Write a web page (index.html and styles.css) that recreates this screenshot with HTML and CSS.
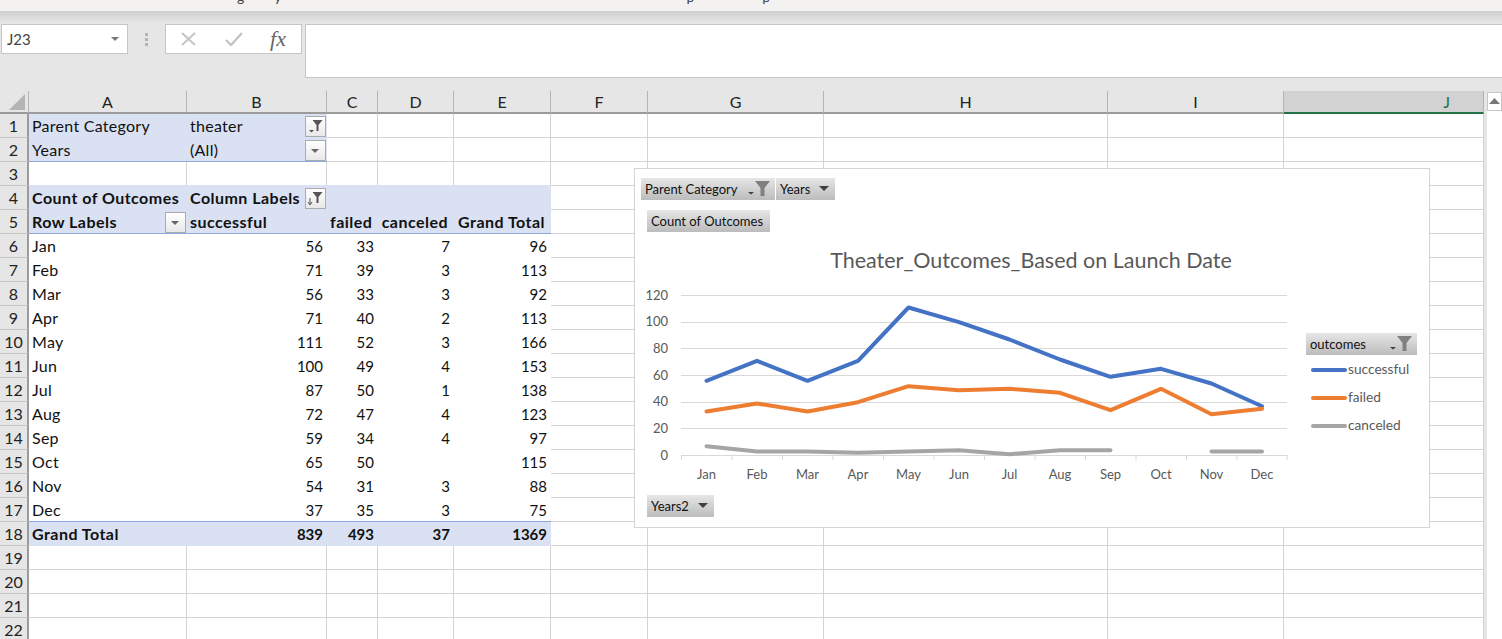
FILE: index.html
```html
<!DOCTYPE html>
<html>
<head>
    <meta charset="utf-8"/>
    <title>Theater outcomes</title>
    <link rel="stylesheet" href="styles.css">
</head>

<body>
<div class="title-edge"><span class="ink ink-g">g</span><span class="ink ink-y">y</span><span class="ink ink-p1">p</span><span class="ink ink-p2">p</span></div>

<div class="formula">
    <div class="name-box">
        <span>J23</span>
        <svg width="9" height="5" viewBox="0 0 9 5"><path d="M0 0h8L4 4z" fill="#777"/></svg>
    </div>
    <div class="grip"><i></i><i></i><i></i></div>
    <div class="fx-box">
        <svg width="16" height="14" viewBox="0 0 16 14"><path d="M1 1l13 12M14 1L1 13" stroke="#c4c4c4" stroke-width="2" fill="none"/></svg>
        <svg width="18" height="14" viewBox="0 0 18 14"><path d="M1 8l5 5L17 1" stroke="#c4c4c4" stroke-width="2.4" fill="none"/></svg>
        <span class="fx">fx</span>
    </div>
    <div class="formula-input"></div>
</div>

<div class="sheet">
    <table class="grid">
        <colgroup>
            <col class="c-rh"><col class="c-a"><col class="c-b"><col class="c-c"><col class="c-d"><col class="c-e"><col class="c-f"><col class="c-g"><col class="c-h"><col class="c-i"><col class="c-j">
        </colgroup>
        <tr class="heads">
            <th class="corner"><svg width="28" height="21" viewBox="0 0 28 21"><path d="M9 19L25 3v16z" fill="#b4b4b4"/></svg></th>
            <th>A</th><th>B</th><th>C</th><th>D</th><th>E</th><th>F</th><th>G</th><th>H</th><th>I</th><th class="active">J</th>
        </tr>
        <tr>
            <th class="rn">1</th>
            <td class="page-f">Parent Category</td>
            <td class="page-f has-btn"><div class="cell-row"><span>theater</span>
                <span class="btn"><svg width="19" height="19" viewBox="0 0 19 19"><path d="M6.500 3h10l-4 5v6h-2V8z" fill="#555"/><path d="M3 13h5l-2.500 2.500z" fill="#555"/></svg></span></div></td>
            <td></td><td></td><td></td><td></td><td></td><td></td><td></td><td></td>
        </tr>
        <tr>
            <th class="rn">2</th>
            <td class="page-f line">Years</td>
            <td class="page-f line has-btn"><div class="cell-row"><span>(All)</span>
                <span class="btn"><svg width="19" height="19" viewBox="0 0 19 19"><path d="M5 8h8l-4 4z" fill="#666"/></svg></span></div></td>
            <td></td><td></td><td></td><td></td><td></td><td></td><td></td><td></td>
        </tr>
        <tr>
            <th class="rn">3</th>
            <td class="no-b"></td><td class="no-b"></td><td class="no-b"></td><td class="no-b"></td><td class="no-b"></td><td></td><td></td><td></td><td></td><td></td>
        </tr>
        <tr>
            <th class="rn">4</th>
            <td class="band top">Count of Outcomes</td>
            <td class="band top has-btn"><div class="cell-row"><span>Column Labels</span>
                <span class="btn"><svg width="19" height="19" viewBox="0 0 19 19"><path d="M6.500 3h10l-4 5v6h-2V8z" fill="#555"/><path d="M4 9v6M2 13l2 3 2-3" stroke="#555" fill="none"/></svg></span></div></td>
            <td class="band top"></td><td class="band top"></td><td class="band top"></td><td></td><td></td><td></td><td></td><td></td>
        </tr>
        <tr>
            <th class="rn">5</th>
            <td class="band line has-btn"><div class="cell-row"><span>Row Labels</span>
                <span class="btn"><svg width="19" height="19" viewBox="0 0 19 19"><path d="M5 8h8l-4 4z" fill="#666"/></svg></span></div></td>
            <td class="band line">successful</td>
            <td class="band line cap">failed</td><td class="band line cap">canceled</td><td class="band line cap">Grand Total</td>
            <td></td><td></td><td></td><td></td><td></td>
        </tr>
        <tr><th class="rn">6</th><td class="pv">Jan</td><td class="pv num">56</td><td class="pv num">33</td><td class="pv num">7</td><td class="pv num">96</td><td></td><td></td><td></td><td></td><td></td></tr>
        <tr><th class="rn">7</th><td class="pv">Feb</td><td class="pv num">71</td><td class="pv num">39</td><td class="pv num">3</td><td class="pv num">113</td><td></td><td></td><td></td><td></td><td></td></tr>
        <tr><th class="rn">8</th><td class="pv">Mar</td><td class="pv num">56</td><td class="pv num">33</td><td class="pv num">3</td><td class="pv num">92</td><td></td><td></td><td></td><td></td><td></td></tr>
        <tr><th class="rn">9</th><td class="pv">Apr</td><td class="pv num">71</td><td class="pv num">40</td><td class="pv num">2</td><td class="pv num">113</td><td></td><td></td><td></td><td></td><td></td></tr>
        <tr><th class="rn">10</th><td class="pv">May</td><td class="pv num">111</td><td class="pv num">52</td><td class="pv num">3</td><td class="pv num">166</td><td></td><td></td><td></td><td></td><td></td></tr>
        <tr><th class="rn">11</th><td class="pv">Jun</td><td class="pv num">100</td><td class="pv num">49</td><td class="pv num">4</td><td class="pv num">153</td><td></td><td></td><td></td><td></td><td></td></tr>
        <tr><th class="rn">12</th><td class="pv">Jul</td><td class="pv num">87</td><td class="pv num">50</td><td class="pv num">1</td><td class="pv num">138</td><td></td><td></td><td></td><td></td><td></td></tr>
        <tr><th class="rn">13</th><td class="pv">Aug</td><td class="pv num">72</td><td class="pv num">47</td><td class="pv num">4</td><td class="pv num">123</td><td></td><td></td><td></td><td></td><td></td></tr>
        <tr><th class="rn">14</th><td class="pv">Sep</td><td class="pv num">59</td><td class="pv num">34</td><td class="pv num">4</td><td class="pv num">97</td><td></td><td></td><td></td><td></td><td></td></tr>
        <tr><th class="rn">15</th><td class="pv">Oct</td><td class="pv num">65</td><td class="pv num">50</td><td class="pv num"></td><td class="pv num">115</td><td></td><td></td><td></td><td></td><td></td></tr>
        <tr><th class="rn">16</th><td class="pv">Nov</td><td class="pv num">54</td><td class="pv num">31</td><td class="pv num">3</td><td class="pv num">88</td><td></td><td></td><td></td><td></td><td></td></tr>
        <tr><th class="rn">17</th><td class="pv line">Dec</td><td class="pv line num">37</td><td class="pv line num">35</td><td class="pv line num">3</td><td class="pv line num">75</td><td></td><td></td><td></td><td></td><td></td></tr>
        <tr><th class="rn">18</th><td class="band">Grand Total</td><td class="band num">839</td><td class="band num">493</td><td class="band num">37</td><td class="band num">1369</td><td></td><td></td><td></td><td></td><td></td></tr>
        <tr><th class="rn">19</th><td></td><td></td><td></td><td></td><td></td><td></td><td></td><td></td><td></td><td></td></tr>
        <tr><th class="rn">20</th><td></td><td></td><td></td><td></td><td></td><td></td><td></td><td></td><td></td><td></td></tr>
        <tr><th class="rn">21</th><td></td><td></td><td></td><td></td><td></td><td></td><td></td><td></td><td></td><td></td></tr>
        <tr><th class="rn">22</th><td></td><td></td><td></td><td></td><td></td><td></td><td></td><td></td><td></td><td></td></tr>
    </table>

    <div class="scrollbar">
        <div class="scroll-up"><svg width="12" height="7" viewBox="0 0 12 7"><path d="M0 6h11L5.500 0z" fill="#777"/></svg></div>
    </div>

    <div class="chart">
        <div class="fields">
            <div class="field f-parent">Parent Category
                <svg class="funnel" width="22" height="16" viewBox="0 0 22 16"><path d="M7 0h15l-5.500 7v8h-4V7z" fill="#808080"/><path d="M0 11h6l-3 2.500z" fill="#404040"/></svg>
            </div>
            <div class="field f-years">Years
                <svg class="arrow" width="11" height="6" viewBox="0 0 11 6"><path d="M0 0h10L5 5z" fill="#404040"/></svg>
            </div>
        </div>
        <div class="fields second">
            <div class="field f-count">Count of Outcomes</div>
        </div>
        <div class="chart-title">Theater_Outcomes_Based on Launch Date</div>
        <div class="plot-row">
            <svg class="plot" width="655" height="206" viewBox="641 284 655 206">
                <g class="gridlines">
                    <path d="M681 295.500H1287M681 322.500H1287M681 348.500H1287M681 375.500H1287M681 402.500H1287M681 428.500H1287M681 455.500H1287"/>
                    <path d="M681.500 455v5M732 455v5M782.500 455v5M833 455v5M883.500 455v5M934 455v5M984.500 455v5M1035 455v5M1085.500 455v5M1136 455v5M1186.500 455v5M1237 455v5M1287 455v5"/>
                </g>
                <g class="y-labels">
                    <text x="668" y="300">120</text>
                    <text x="668" y="326">100</text>
                    <text x="668" y="353">80</text>
                    <text x="668" y="380">60</text>
                    <text x="668" y="406">40</text>
                    <text x="668" y="433">20</text>
                    <text x="668" y="460">0</text>
                </g>
                <g class="x-labels">
                    <text x="706.500" y="479">Jan</text>
                    <text x="757" y="479">Feb</text>
                    <text x="807.500" y="479">Mar</text>
                    <text x="858" y="479">Apr</text>
                    <text x="908.500" y="479">May</text>
                    <text x="959" y="479">Jun</text>
                    <text x="1009.500" y="479">Jul</text>
                    <text x="1060" y="479">Aug</text>
                    <text x="1110.500" y="479">Sep</text>
                    <text x="1161" y="479">Oct</text>
                    <text x="1211.500" y="479">Nov</text>
                    <text x="1262" y="479">Dec</text>
                </g>
                <polyline class="series s-ok" points="706.500,380.800 757,360.800 807.500,380.800 858,360.800 908.500,307.500 959,322.200 1009.500,339.500 1060,359.500 1110.500,376.800 1161,368.800 1211.500,383.500 1262,406.200"/>
                <polyline class="series s-fail" points="706.500,411.500 757,403.500 807.500,411.500 858,402.200 908.500,386.200 959,390.200 1009.500,388.800 1060,392.800 1110.500,410.200 1161,388.800 1211.500,414.200 1262,408.800"/>
                <polyline class="series s-cancel" points="706.500,446.200 757,451.500 807.500,451.500 858,452.800 908.500,451.500 959,450.200 1009.500,454.200 1060,450.200 1110.500,450.200"/>
                <polyline class="series s-cancel" points="1211.500,451.500 1262,451.500"/>
            </svg>
            <div class="legend">
                <div class="field legend-field">outcomes
                    <svg class="funnel" width="22" height="16" viewBox="0 0 22 16"><path d="M7 0h15l-5.500 7v8h-4V7z" fill="#808080"/><path d="M0 11h6l-3 2.500z" fill="#404040"/></svg>
                </div>
                <div class="legend-item"><i class="key k-ok"></i>successful</div>
                <div class="legend-item"><i class="key k-fail"></i>failed</div>
                <div class="legend-item"><i class="key k-cancel"></i>canceled</div>
            </div>
        </div>
        <div class="fields second">
            <div class="field f-years2">Years2
                <svg class="arrow" width="11" height="6" viewBox="0 0 11 6"><path d="M0 0h10L5 5z" fill="#404040"/></svg>
            </div>
        </div>
    </div>
</div>
</body>
</html>
```

FILE: styles.css
```css
* {
    margin: 0;
    padding: 0;
    box-sizing: border-box;
}
html, body {
    height: 639px;
    overflow: hidden;
}
body {
    background: #e6e6e6;
    font-family: "Lato", "Liberation Sans", sans-serif;
    font-size: 15px;
    color: #111;
}

/* window title, only the descenders are left on screen */
.title-edge {
    height: 11px;
    background: #f3f2f1;
    overflow: hidden;
    display: flex;
    align-items: flex-start;
    font-size: 14px;
    line-height: 2px;
    color: #444;
}
.ink {
    margin-top: -4px;
}
.ink-g { margin-left: 237px; }
.ink-y { margin-left: 30px; }
.ink-p1 { margin-left: 405px; }
.ink-p2 { margin-left: 68px; }

/* formula bar */
.formula {
    height: 80px;
    padding-top: 13px;
    display: flex;
    align-items: flex-start;
    background: linear-gradient(#cfcfcf, #e6e6e6 12px);
}
.name-box {
    width: 127px;
    height: 30px;
    margin-left: 1px;
    padding: 0 7px 0 5px;
    display: flex;
    align-items: center;
    justify-content: space-between;
    background: #fff;
    border: 1px solid #c6c6c6;
    color: #444;
}
.grip {
    width: 37px;
    height: 30px;
    display: flex;
    flex-direction: column;
    align-items: center;
    justify-content: center;
    gap: 2px;
}
.grip i {
    width: 3px;
    height: 3px;
    background: #b4b4b4;
}
.fx-box {
    width: 137px;
    height: 30px;
    padding: 0 15px;
    display: flex;
    align-items: center;
    justify-content: space-between;
    background: #fff;
    border: 1px solid #c6c6c6;
}
.fx {
    font-family: "Liberation Serif", serif;
    font-style: italic;
    font-size: 22px;
    color: #666;
}
.formula-input {
    flex: 1;
    height: 54px;
    margin-left: 3px;
    background: #fff;
    border: 1px solid #c6c6c6;
    border-right: 0;
}

/* sheet */
.sheet {
    position: relative;
    display: flex;
    align-items: flex-start;
}
.grid {
    width: 1484px;
    flex: none;
    table-layout: fixed;
    border-collapse: separate;
    border-spacing: 0;
    background: #fff;
}
.c-rh { width: 29px; }
.c-a { width: 158px; }
.c-b { width: 140px; }
.c-c { width: 51px; }
.c-d { width: 76px; }
.c-e { width: 97px; }
.c-f { width: 97px; }
.c-g { width: 176px; }
.c-h { width: 284px; }
.c-i { width: 176px; }
.c-j { width: 200px; }
.grid tr {
    height: 24px;
}
.grid td {
    height: 24px;
    padding: 0 3px 2px;
    border-right: 1px solid #d4d4d4;
    border-bottom: 1px solid #d4d4d4;
    white-space: nowrap;
    font-size: 16px;
    letter-spacing: 0.27px;
    line-height: 21px;
}
.grid .heads {
    height: 23px;
}
.heads th {
    height: 23px;
    font-weight: normal;
    font-size: 16px;
    line-height: 21px;
    color: #222;
    background: #e6e6e6;
    border-right: 1px solid #b4b4b4;
    border-bottom: 2px solid #9b9b9b;
}
.corner svg {
    display: block;
}
.heads .active {
    padding-right: 33px;
    text-align: right;
    color: #217346;
    background: #d2d2d2;
    border-bottom-color: #217346;
}
.rn {
    font-weight: normal;
    font-size: 16px;
    line-height: 23px;
    color: #222;
    background: #e6e6e6;
    border-right: 2px solid #9b9b9b;
    border-bottom: 1px solid #c6c6c6;
}

.grid .page-f,
.grid .band {
    background: #d9e1f2;
    border-right: 0;
    border-bottom: 0;
}
.grid .band {
    font-weight: bold;
    letter-spacing: 0.47px;
}
/* the fill covers the gridline of the row above */
.grid .top {
    box-shadow: 0 -1px 0 #d9e1f2;
}
.grid .pv {
    border-right: 0;
    border-bottom: 0;
}
.grid .no-b {
    border-bottom: 0;
}
.grid .line {
    padding-bottom: 1px;
    border-bottom: 1px solid #8ea9db;
}
.grid .num {
    padding: 0 4px 0 3px;
    text-align: right;
    font-size: 15px;
    line-height: 20px;
    letter-spacing: 0;
}
.grid .cap {
    padding-right: 6px;
    text-align: right;
}
.grid .has-btn {
    padding: 0 1px 0 3px;
}
.grid .line.num,
.grid .line.has-btn {
    padding-top: 1px;
    padding-bottom: 0;
}
.cell-row {
    height: 21px;
    display: flex;
    align-items: center;
    justify-content: space-between;
}
.cell-row > span:first-child {
    margin-bottom: 2px;
    line-height: 19px;
}
.btn {
    width: 21px;
    height: 21px;
    display: block;
    background: linear-gradient(#fff, #e8e8e8);
    border: 1px solid #ababab;
}
.btn svg {
    display: block;
}

.scrollbar {
    flex: 1;
    height: 548px;
    padding-left: 3px;
}
.scroll-up {
    height: 19px;
    margin-top: 1px;
    display: flex;
    align-items: center;
    justify-content: center;
    background: #fff;
    border: 1px solid #c6c6c6;
}
.scrollbar::after {
    content: "";
    display: block;
    height: 528px;
    background: #fff;
}

/* pivot chart sits over the cells */
.chart {
    position: absolute;
    left: 634px;
    top: 77px;
    width: 796px;
    height: 360px;
    padding: 9px 0 0 6px;
    background: #fff;
    border: 1px solid #d4d4d4;
}
.fields {
    display: flex;
    gap: 1px;
    margin-bottom: 10px;
}
.fields.second {
    margin-left: 6px;
}
.field {
    height: 22px;
    padding: 0 5px 0 4px;
    display: flex;
    align-items: center;
    justify-content: space-between;
    font-size: 13px;
    line-height: 22px;
    color: #111;
    background: linear-gradient(#e6e6e6, #bcbcbc);
}
.f-parent { width: 134px; }
.f-years { width: 59px; }
.f-count { width: 123px; }
.f-years2 { width: 67px; }
.funnel {
    flex: none;
}
.chart-title {
    width: 780px;
    margin-top: 13px;
    height: 30px;
    line-height: 30px;
    text-align: center;
    font-size: 21.500px;
    color: #595959;
}
.plot-row {
    display: flex;
    margin-top: 9px;
    height: 211px;
}
.plot {
    display: block;
    flex: none;
}
.gridlines path {
    fill: none;
    stroke: #d9d9d9;
    stroke-width: 1;
}
.plot text {
    font-size: 13px;
    fill: #595959;
}
.y-labels text {
    text-anchor: end;
}
.x-labels text {
    text-anchor: middle;
}
.series {
    fill: none;
    stroke-width: 4;
    stroke-linecap: round;
    stroke-linejoin: round;
}
.s-ok { stroke: #4472c4; }
.s-fail { stroke: #ed7d31; }
.s-cancel { stroke: #a5a5a5; }
.legend {
    width: 111px;
    margin-left: 10px;
    padding-top: 49px;
}
.legend-field {
    width: 111px;
}
.legend-item {
    height: 28px;
    margin-left: 5px;
    padding-bottom: 2px;
    display: flex;
    align-items: center;
    font-size: 13.700px;
    color: #595959;
}
.key {
    width: 36px;
    height: 4px;
    margin: 4px 1px 0 0;
    border-radius: 2px;
}
.k-ok { background: #4472c4; }
.k-fail { background: #ed7d31; }
.k-cancel { background: #a5a5a5; }
```
